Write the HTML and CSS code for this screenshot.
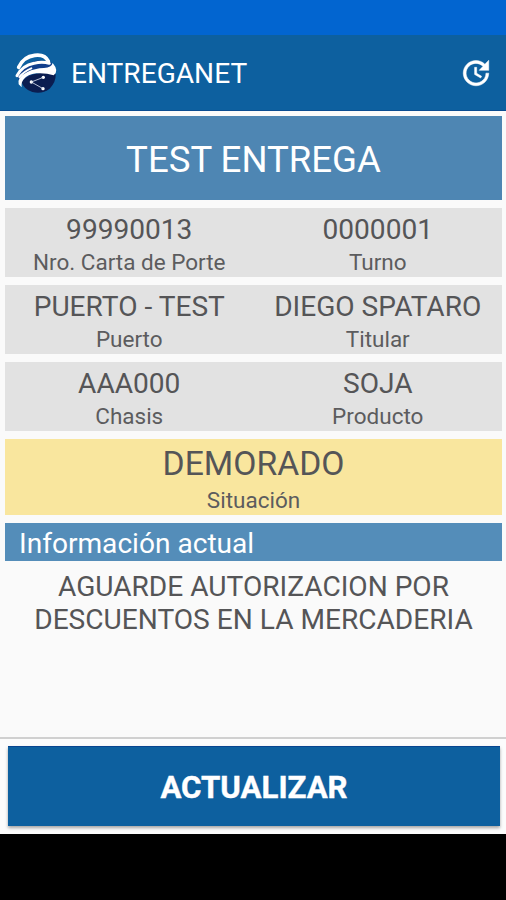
FILE: index.html
```html
<!DOCTYPE html>
<html lang="es">
<head>
<meta charset="utf-8">
<title>ENTREGANET</title>
<link rel="stylesheet" href="styles.css">
</head>
<body>
<div class="screen">
  <div class="status-bar"></div>
  <header class="app-bar">
    <svg class="logo" viewBox="0 0 144 144" aria-hidden="true">
      <path fill="#123f8c" d="M16 84Q32 42 80 34L118 40L124 62L70 70L24 98Z"/>
      <path fill="#0b1d50" d="M28 98Q48 76 84 72Q112 70 131 76Q132 100 113 119Q91 136 61 129Q36 121 28 98Z"/>
      <g fill="none" stroke="#fff" stroke-linecap="round">
        <path stroke-width="11" d="M20 55Q34 23 68 19Q99 15 109 37"/>
        <path stroke-width="9" d="M15 80Q31 50 66 43Q90 37 112 43"/>
        <path stroke-width="6" d="M22 84Q36 67 58 58"/>
      </g>
      <g fill="#fff">
        <path d="M20 106Q15 84 46 69Q68 58 96 57Q119 55 122 42Q142 66 125 79Q101 71 73 73Q47 76 35 91Q27 100 29 115Z"/>
        <circle cx="94" cy="85" r="5"/><circle cx="58" cy="99" r="5"/><circle cx="93" cy="119" r="5"/>
      </g>
      <path fill="none" stroke="#dce3f2" stroke-width="2.500" d="M94 85L58 99L93 119"/>
    </svg>
    <h1 class="app-title">ENTREGANET</h1>
    <svg class="refresh" viewBox="0 0 24 24" aria-hidden="true">
      <path fill="#fff" stroke="#fff" stroke-width=".35" d="M21 10.120h-6.780l2.740-2.820c-2.730-2.700-7.150-2.800-9.880-.1-2.730 2.710-2.730 7.080 0 9.790s7.150 2.710 9.880 0C18.320 15.650 19 14.080 19 12.100h2c0 1.980-.88 4.550-2.640 6.290-3.510 3.480-9.210 3.480-12.720 0-3.500-3.470-3.530-9.110-.02-12.580s9.140-3.470 12.650 0L21 3v7.120zM12.500 8v4.250l3.500 2.080-.72 1.210L11 13V8h1.500z"/>
    </svg>
  </header>
  <main class="content">
    <div class="banner">TEST ENTREGA</div>
    <section class="row">
      <div class="cell"><div class="value">99990013</div><div class="label">Nro. Carta de Porte</div></div>
      <div class="cell"><div class="value">0000001</div><div class="label">Turno</div></div>
    </section>
    <section class="row">
      <div class="cell"><div class="value">PUERTO - TEST</div><div class="label">Puerto</div></div>
      <div class="cell"><div class="value">DIEGO SPATARO</div><div class="label">Titular</div></div>
    </section>
    <section class="row">
      <div class="cell"><div class="value">AAA000</div><div class="label">Chasis</div></div>
      <div class="cell"><div class="value">SOJA</div><div class="label">Producto</div></div>
    </section>
    <section class="situation">
      <div class="state">DEMORADO</div>
      <div class="label">Situación</div>
    </section>
    <h2 class="info-title">Información actual</h2>
    <p class="message">AGUARDE AUTORIZACION POR DESCUENTOS EN LA MERCADERIA</p>
  </main>
  <footer class="actions"><button class="update" type="button">ACTUALIZAR</button></footer>
  <div class="nav-bar"></div>
</div>
</body>
</html>
```
FILE: styles.css
```css
* { box-sizing: border-box; }
body { margin: 0; font-family: Roboto, "Liberation Sans", sans-serif; color: #555557; }
.screen { display: flex; flex-direction: column; width: 506px; height: 900px; background: #fafafa; overflow: hidden; }
.status-bar { height: 35px; background: #0265d0; }
.app-bar { display: flex; align-items: center; height: 76px; padding: 0 13px 0 12px; background: #0d609f; border-bottom: 1px solid #0a4c91; }
.logo { width: 48px; height: 48px; }
.app-title { flex: 1; margin: 3px 0 0 11px; font-size: 28.100px; line-height: 34px; font-weight: 400; color: #fff; }
.refresh { width: 34px; height: 34px; }
.content { flex: 1; display: flex; flex-direction: column; gap: 8.400px; padding: 5px 4px 0 5px; }
.banner { height: 84px; padding-top: 22px; background: #4e86b3; color: #fff; font-size: 36.600px; line-height: 44px; text-align: center; }
.row { display: grid; grid-template-columns: 1fr 1fr; height: 68.500px; padding-top: 4.600px; background: #e2e2e2; text-align: center; }
.value { font-size: 28.100px; line-height: 33px; }
.label { margin-top: 3.400px; font-size: 22.500px; line-height: 27px; color: #5c5c5e; }
.situation { height: 76px; padding-top: 5px; background: #f9e69e; text-align: center; }
.state { font-size: 33.700px; line-height: 40px; }
.info-title { height: 37.500px; margin: 0; padding: 4px 0 0 14px; background: #548db9; color: #fff; font-size: 28.100px; line-height: 34px; font-weight: 400; }
.message { margin: 0; padding: 1px 20px 0; font-size: 28.100px; line-height: 33px; text-align: center; }
.actions { height: 96.500px; padding: 7px 6px 0 8px; border-top: 2px solid #d0d0d0; background: #fcfcfc; }
.update { display: block; width: 100%; height: 80px; padding: 2px 0 0; border: 0; border-top: 1px solid #084590; background: #0d609f; box-shadow: 0 2px 3px rgba(0, 0, 0, .35); color: #fff; font-family: inherit; font-size: 31.200px; font-weight: 700; -webkit-text-stroke: .4px #fff; }
.nav-bar { height: 66.500px; background: #000; }
```
